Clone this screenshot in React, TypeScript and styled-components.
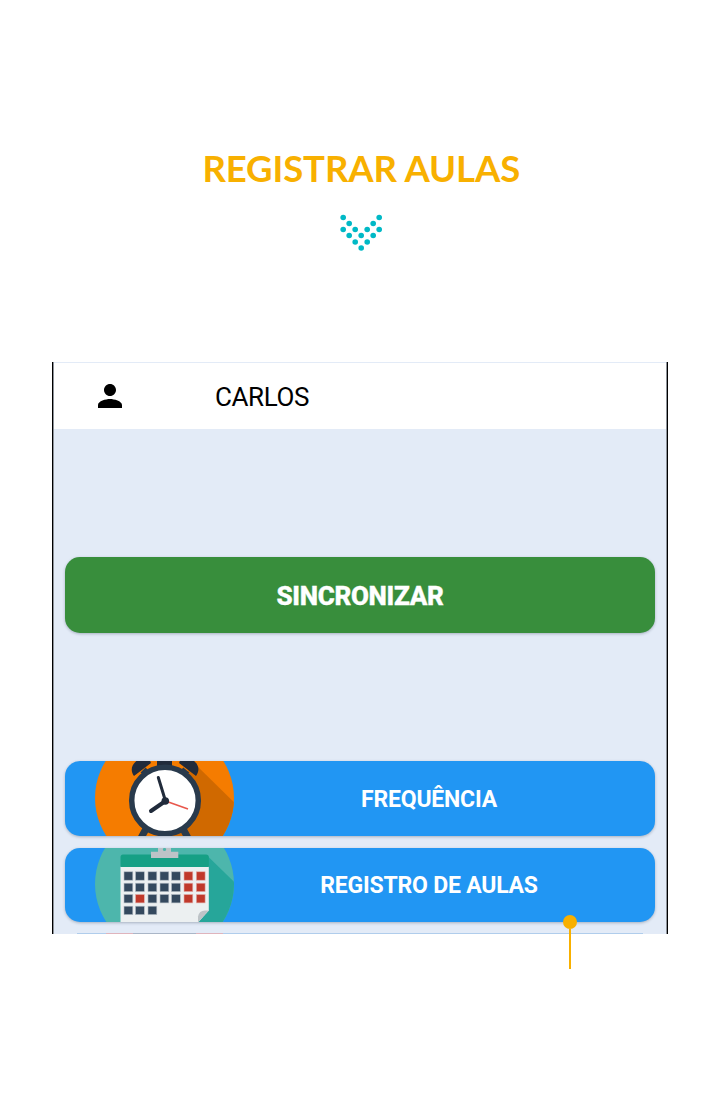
import React from "react";
import styled, { createGlobalStyle } from "styled-components";

const GlobalStyle = createGlobalStyle`
  * { box-sizing: border-box; }
  body { margin: 0; background: #ffffff; }
`;

const Page = styled.main`
  width: 720px;
  height: 1096px;
  display: flex;
  flex-direction: column;
  align-items: center;
  overflow: hidden;
  background: #ffffff;
  font-family: Roboto, sans-serif;
`;

const Title = styled.h1`
  margin: 143px 0 0 2.5px;
  height: 51px;
  line-height: 50px;
  font-family: Lato, sans-serif;
  font-size: 36.5px;
  font-weight: 700;
  letter-spacing: -0.1px;
  white-space: nowrap;
  color: #f8b000;
`;

const Chevron = styled.svg`
  display: block;
  margin: 18px 0 0 2.5px;
  flex: none;
`;

const Screen = styled.section`
  position: relative;
  width: 616px;
  height: 572px;
  margin-top: 108px;
  flex: none;
  display: flex;
  flex-direction: column;
  border: solid #000000;
  border-width: 0 1px;
  background: #e3ebf7;
  box-shadow: inset 1px 0 #8d9299, inset -1px 0 #8d9299;
`;

const Header = styled.header`
  height: 66px;
  margin: 1px 1px 0;
  flex: none;
  display: flex;
  align-items: center;
  padding-left: 38px;
  background: #ffffff;
`;

const UserName = styled.span`
  margin: 2px 0 0 87px;
  font-size: 26px;
  line-height: 30px;
  letter-spacing: -0.4px;
  color: #000000;
`;

const Button = styled.button<{ $tone: "green" | "blue"; $top: number }>`
  position: relative;
  height: ${(p) => (p.$tone === "green" ? 76 : 74.5)}px;
  margin: ${(p) => p.$top}px 12px 0;
  padding: 0;
  flex: none;
  border: 0;
  border-radius: 15px;
  display: flex;
  align-items: center;
  overflow: hidden;
  color: #ffffff;
  font-family: Roboto, sans-serif;
  font-weight: 700;
  background: ${(p) => (p.$tone === "green" ? "#388e3c" : "#2196f3")};
  box-shadow: 0 1px 3px rgba(40, 55, 80, 0.32);
`;

const SyncLabel = styled.span`
  flex: 1;
  padding-top: 1px;
  font-size: 26px;
  font-weight: 800;
  line-height: 30px;
  letter-spacing: -0.3px;
  text-align: center;
  -webkit-text-stroke: 0.4px #ffffff;
`;

const MenuLabel = styled.span`
  width: 390px;
  padding-top: 3px;
  font-size: 23px;
  line-height: 28px;
  letter-spacing: -0.2px;
  text-align: center;
`;

const Art = styled.svg`
  display: block;
  margin-left: 30px;
  flex: none;
`;

const NextCard = styled.div`
  height: 1px;
  margin: 11px 24px 0;
  display: flex;
  background: #b0cdec;
`;

const NextCardTint = styled.span<{ $left: number; $color: string; $width: number }>`
  width: ${(p) => p.$width}px;
  margin-left: ${(p) => p.$left}px;
  background: ${(p) => p.$color};
`;

const Pointer = styled.div`
  position: absolute;
  left: 510px;
  top: 553px;
  width: 14px;
  display: flex;
  flex-direction: column;
  align-items: center;
`;

const PointerDot = styled.span`
  width: 14px;
  height: 14px;
  border-radius: 50%;
  background: #f8b000;
`;

const PointerLine = styled.span`
  width: 2px;
  height: 40px;
  background: #f8b000;
`;

const DOTS = [
  [3, 5], [39, 5], [9, 11], [33, 11], [3, 17], [15, 17], [27, 17], [39, 17],
  [9, 23], [21, 23], [33, 23], [15, 29.5], [27, 29.5], [21, 35.5],
];

const ClockArt = () => (
  <Art width="139" height="75" viewBox="95 761 139 75">
    <defs>
      <clipPath id="clock-disc"><circle cx="164.5" cy="798" r="69.5" /></clipPath>
    </defs>
    <circle cx="164.5" cy="798" r="69.5" fill="#f57c00" />
    <path d="M194 763 L246 814 V850 H165 V800 Z" fill="#d06900" clipPath="url(#clock-disc)" />
    <path d="M157 761 H172 V768 H157 Z" fill="#212b3b" />
    <path d="M142 774 L147 769 M188 774 L182 769" stroke="#293a4c" strokeWidth="4" />
    <path d="M134 776 C128 768 135 760 142 758 H149 L151 763 Z M196 776 C202 768 196 760 188 758 H181 L179 763 Z" fill="#212b3b" />
    <path d="M147 827 L141 838 M182 827 L188 838" stroke="#293a4c" strokeWidth="7" />
    <circle cx="165" cy="800.5" r="33.3" fill="#ffffff" stroke="#293a4c" strokeWidth="5.5" />
    <path d="M165.5 801 L158.3 777.5" stroke="#212b3b" strokeWidth="3" strokeLinecap="round" />
    <path d="M165.5 801 L151 811" stroke="#212b3b" strokeWidth="4" strokeLinecap="round" />
    <path d="M165.5 801 L188 809" stroke="#e8574c" strokeWidth="1.5" />
    <circle cx="165.3" cy="801" r="3.8" fill="#212b3b" />
  </Art>
);

const COLUMNS = [124, 135.5, 148, 160, 171.5, 184, 196.3];
const ROWS = [872.3, 883.7, 895, 906.7];

const isRed = (row: number, col: number) => col > 4 || (row === 2 && col === 1);

const CalendarArt = () => (
  <Art width="139" height="75" viewBox="95 847.5 139 75">
    <defs>
      <clipPath id="calendar-disc"><circle cx="164.5" cy="884.5" r="69.5" /></clipPath>
    </defs>
    <circle cx="164.5" cy="884.5" r="69.5" fill="#4db6ac" />
    <path d="M207 856 L250 898 V940 H165 V870 Z" fill="#26a69a" clipPath="url(#calendar-disc)" />
    <path d="M120.5 867 H208.8 V911 L198 923 H120.5 Z" fill="#ecf0f1" />
    <path d="M120.5 867.5 V857.5 Q120.5 855 123 855 H206 Q208.8 855 208.8 857.5 V867.5 Z" fill="#16a085" />
    <path d="M151 852.3 H158 V847 H171 V852.3 H178.3 V858.5 H151 Z" fill="#bdc3c7" />
    <circle cx="164.5" cy="850" r="1.6" fill="#4db6ac" />
    {ROWS.map((y, row) =>
      COLUMNS.slice(0, row === 3 ? 3 : 7).map((x, col) => (
        <rect
          key={`${row}-${col}`}
          x={x}
          y={y}
          width="8.8"
          height="8.4"
          fill={isRed(row, col) ? "#c0392b" : "#34495e"}
          stroke={isRed(row, col) ? "#e3b0ac" : "#b2bbc3"}
          strokeWidth="0.6"
        />
      )),
    )}
    <path d="M198 923 V917 Q199 911 205 911 H208.8 Z" fill="#bdc3c7" />
  </Art>
);

export default function App() {
  return (
    <Page>
      <GlobalStyle />
      <Title>REGISTRAR AULAS</Title>
      <Chevron width="42" height="42" viewBox="-0.2 -0.5 42 42">
        {DOTS.map(([x, y]) => (
          <circle key={`${x}-${y}`} cx={x} cy={y} r="2.8" fill="#00b9c6" />
        ))}
      </Chevron>
      <Screen>
        <Header>
          <svg width="36" height="36" viewBox="0 0 24 24">
            <path d="M12 12c2.21 0 4-1.79 4-4s-1.79-4-4-4-4 1.79-4 4 1.79 4 4 4zm0 2c-2.67 0-8 1.34-8 4v2h16v-2c0-2.66-5.33-4-8-4z" />
          </svg>
          <UserName>CARLOS</UserName>
        </Header>
        <Button $tone="green" $top={128}>
          <SyncLabel>SINCRONIZAR</SyncLabel>
        </Button>
        <Button $tone="blue" $top={128}>
          <ClockArt />
          <MenuLabel>FREQUÊNCIA</MenuLabel>
        </Button>
        <Button $tone="blue" $top={12}>
          <CalendarArt />
          <MenuLabel>REGISTRO DE AULAS</MenuLabel>
        </Button>
        <NextCard>
          <NextCardTint $left={29} $width={27} $color="#dfb4bd" />
          <NextCardTint $left={0} $width={63} $color="#aab6c7" />
          <NextCardTint $left={0} $width={27} $color="#dfb4bd" />
        </NextCard>
        <Pointer>
          <PointerDot />
          <PointerLine />
        </Pointer>
      </Screen>
    </Page>
  );
}
